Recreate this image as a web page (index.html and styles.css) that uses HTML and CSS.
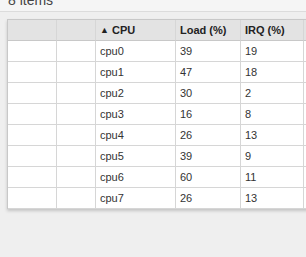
FILE: index.html
```html
<!DOCTYPE html>
<html>
<head>
<meta charset="utf-8">
<link rel="stylesheet" href="styles.css">
</head>
<body>
<div class="topbar"><span class="count">8 items</span></div>
<div class="wrap">
  <div class="grid">
    <div class="cell head"></div>
    <div class="cell head"></div>
    <div class="cell head"><span class="sort">▲</span> CPU</div>
    <div class="cell head">Load (%)</div>
    <div class="cell head">IRQ (%)</div>
    <div class="cell head"></div>

    <div class="cell"></div><div class="cell"></div><div class="cell">cpu0</div><div class="cell">39</div><div class="cell">19</div><div class="cell"></div>
    <div class="cell"></div><div class="cell"></div><div class="cell">cpu1</div><div class="cell">47</div><div class="cell">18</div><div class="cell"></div>
    <div class="cell"></div><div class="cell"></div><div class="cell">cpu2</div><div class="cell">30</div><div class="cell">2</div><div class="cell"></div>
    <div class="cell"></div><div class="cell"></div><div class="cell">cpu3</div><div class="cell">16</div><div class="cell">8</div><div class="cell"></div>
    <div class="cell"></div><div class="cell"></div><div class="cell">cpu4</div><div class="cell">26</div><div class="cell">13</div><div class="cell"></div>
    <div class="cell"></div><div class="cell"></div><div class="cell">cpu5</div><div class="cell">39</div><div class="cell">9</div><div class="cell"></div>
    <div class="cell"></div><div class="cell"></div><div class="cell">cpu6</div><div class="cell">60</div><div class="cell">11</div><div class="cell"></div>
    <div class="cell"></div><div class="cell"></div><div class="cell">cpu7</div><div class="cell">26</div><div class="cell">13</div><div class="cell"></div>
  </div>
</div>
</body>
</html>
```
FILE: styles.css
```css
html, body {
  margin: 0;
  padding: 0;
}
body {
  background: #efefef;
  font-family: "Liberation Sans", Arial, sans-serif;
  color: #333;
  width: 306px;
  height: 257px;
  overflow: hidden;
}
.topbar {
  height: 11px;
  background: #f5f5f5;
  border-bottom: 1px solid #dcdcdc;
  overflow: hidden;
}
.count {
  display: block;
  font-size: 14px;
  line-height: 14px;
  margin-top: -7px;
  padding-left: 8px;
  color: #444;
}
.wrap {
  padding: 7px 0 0 7px;
}
.grid {
  display: grid;
  grid-template-columns: 49px 39px 80px 65px 63px 60px;
  width: 356px;
  border-left: 1px solid #c8c8c8;
  border-top: 1px solid #c8c8c8;
  background: #fff;
  box-shadow: 0 2px 3px rgba(0,0,0,0.18);
}
.cell {
  box-sizing: border-box;
  height: 21px;
  border-right: 1px solid #d6d6d6;
  border-bottom: 1px solid #d6d6d6;
  padding: 0 4px;
  font-size: 11px;
  line-height: 20px;
  white-space: nowrap;
  color: #333;
}
.head {
  background: #e3e3e3;
  font-weight: bold;
  color: #222;
  border-bottom-color: #c8c8c8;
}
.sort {
  font-size: 9px;
  vertical-align: 1px;
}
```
